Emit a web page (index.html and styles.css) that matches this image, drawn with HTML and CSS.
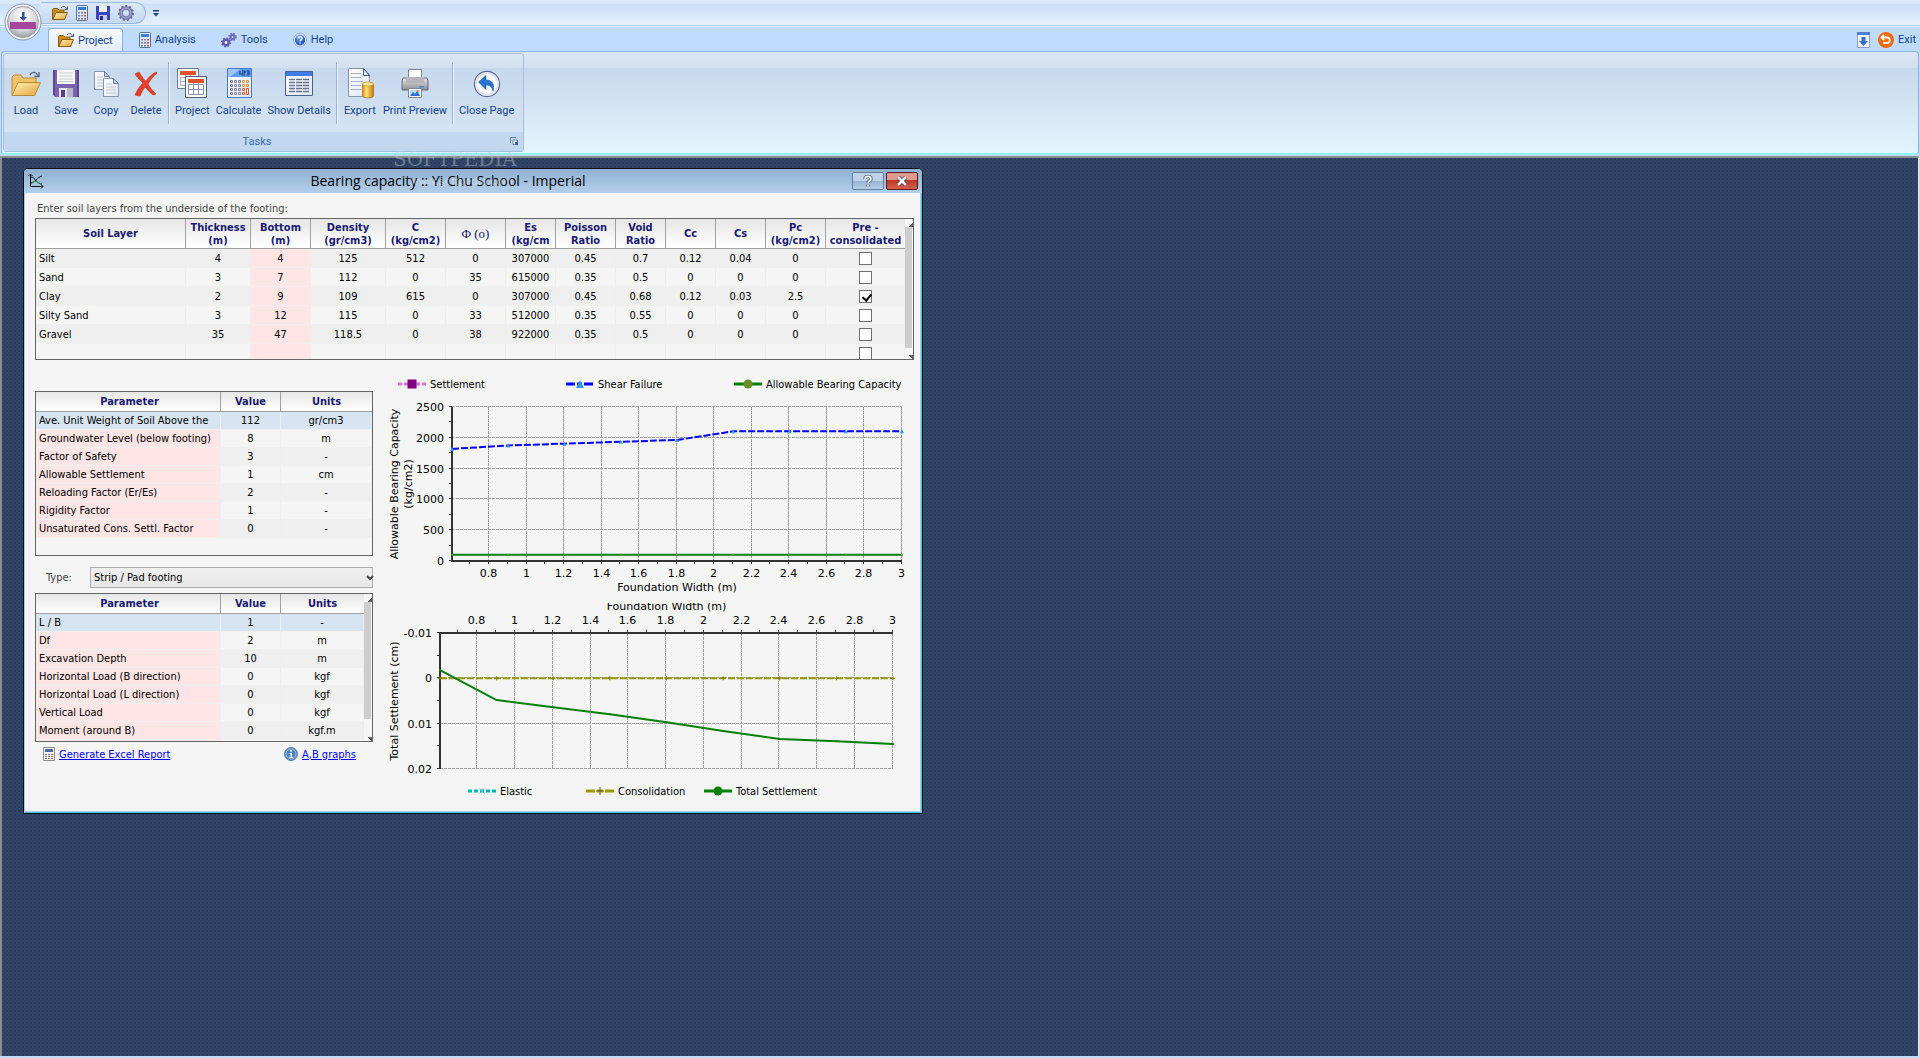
FILE: index.html
```html
<!DOCTYPE html>
<html lang="en">
<head>
  <meta charset="UTF-8" />
  <meta name="viewport" content="width=device-width, initial-scale=1" />
  <title>Bearing capacity</title>
  <link rel="stylesheet" href="styles.css">
</head>
<body>
  <svg class="sprite" aria-hidden="true">
    <defs>
      <linearGradient id="gold" x1="0" y1="0" x2="1" y2="1"><stop offset="0" stop-color="#fff0b8"/><stop offset="1" stop-color="#e5a53a"/></linearGradient>
      <linearGradient id="paper" x1="0" y1="0" x2="1" y2="1"><stop offset="0" stop-color="#fff"/><stop offset="1" stop-color="#dfe6f3"/></linearGradient>
      <linearGradient id="drum" x1="0" y1="0" x2="1" y2="0"><stop offset="0" stop-color="#d98a12"/><stop offset=".35" stop-color="#ffe27a"/><stop offset="1" stop-color="#c47a08"/></linearGradient>
      <linearGradient id="steel" x1="0" y1="0" x2="0" y2="1"><stop offset="0" stop-color="#e8e8e8"/><stop offset="1" stop-color="#8c8c92"/></linearGradient>
      <radialGradient id="orb" cx=".5" cy=".3" r=".8"><stop offset="0" stop-color="#fff"/><stop offset=".6" stop-color="#d0d2d6"/><stop offset="1" stop-color="#84888f"/></radialGradient>
      <radialGradient id="ball" cx=".4" cy=".3" r=".7"><stop offset="0" stop-color="#6fa4ff"/><stop offset="1" stop-color="#1748b8"/></radialGradient>

      <symbol id="i-open" viewBox="0 0 16 16">
        <path d="M.5 14.5V4.5l1-1h4l1.500 1.500h5v3" fill="#c98f24" stroke="#8a5a10"/>
        <path d="M.7 14.500 4 7.500h11.500l-3 7z" fill="url(#gold)" stroke="#8a5a10"/>
        <path d="M9 3c2-2.500 4.500-1.500 5.500 1M15.500 1.500v3h-3" fill="none" stroke="#4a5568"/>
      </symbol>
      <symbol id="i-calc" viewBox="0 0 12 16">
        <rect x=".5" y=".5" width="11" height="15" rx="1" fill="#dfe9f8" stroke="#58709c"/>
        <path d="M2 2h8v3H2z" fill="#3b7ee0"/>
        <path d="M2 7h2v1.500H2zM5 7h2v1.500H5zM2 10h2v1.500H2zM5 10h2v1.500H5zM2 13h2v1.500H2zM5 13h2v1.500H5z" fill="#6d83a8"/>
        <path d="M8 7h2v1.500H8zM8 10h2v1.500H8zM8 13h2v1.500H8z" fill="#d8442e"/>
      </symbol>
      <symbol id="i-disk" viewBox="0 0 14 14">
        <path d="M0 0h14v14H1.500L0 12.500z" fill="#3b46b8"/>
        <path d="M3 0h8v6H3z" fill="#f2f4ff"/><path d="M3 9h8v5H3z" fill="#c5cbe6"/><path d="M4 10h3v4H4z" fill="#262e80"/>
      </symbol>
      <symbol id="i-gear" viewBox="0 0 16 16">
        <circle cx="8" cy="8" r="5" fill="none" stroke="#8084b4" stroke-width="4"/>
        <circle cx="8" cy="8" r="7" fill="none" stroke="#666a9c" stroke-width="2" stroke-dasharray="2 2"/>
        <circle cx="8" cy="8" r="5" fill="none" stroke="#a9abc9" stroke-width="1"/>
      </symbol>
      <symbol id="i-gears" viewBox="0 0 16 16">
        <circle cx="5" cy="10.500" r="2.700" fill="#f0f3ff" stroke="#5f5bb0" stroke-width="2.500"/>
        <circle cx="5" cy="10.500" r="4.200" fill="none" stroke="#5f5bb0" stroke-width="1.600" stroke-dasharray="1.600 1.700"/>
        <circle cx="11.500" cy="5" r="2" fill="#f0f3ff" stroke="#6f6bbb" stroke-width="2.300"/>
        <circle cx="11.500" cy="5" r="3.500" fill="none" stroke="#6f6bbb" stroke-width="1.500" stroke-dasharray="1.400 1.400"/>
      </symbol>
      <symbol id="i-help" viewBox="0 0 14 14">
        <circle cx="7" cy="7" r="6.500" fill="#fff" stroke="#8aa4d8"/><circle cx="7" cy="7" r="5.200" fill="url(#ball)"/>
        <path d="M5 5.600c0-2.600 4-2.400 4-.2 0 1.400-1.900 1.500-1.900 2.800M7.100 9.600v1.200" fill="none" stroke="#fff" stroke-width="1.400"/>
      </symbol>

      <symbol id="b-load" viewBox="0 0 32 32">
        <path d="M2 27V9l2-2h7l2 3h13v5" fill="#f3c268" stroke="#b98a3c"/>
        <path d="M2 27.500 8 14.500h22.500l-6 13z" fill="url(#gold)" stroke="#b98a3c"/>
        <path d="M20 7c2-4 6-3 8 .5M29 4v4.500h-4.500" fill="none" stroke="#5a6678" stroke-width="1.300"/>
      </symbol>
      <symbol id="b-save" viewBox="0 0 32 32">
        <path d="M3 2h26v27H5l-2-2z" fill="#7a62b0"/><path d="M3 2h2v25H3zM27 2h2v27h-2z" fill="#5d478f"/>
        <path d="M7 2h18v14H7z" fill="#f8f8f8"/><path d="M9 5h14M9 8h14M9 11h14M9 13.500h14" stroke="#c9cbd2"/>
        <path d="M9 20h14v9H9z" fill="#e3e4ea"/><path d="M11 22h4v7h-4z" fill="#55447f"/><path d="M17 20h6v9h-6z" fill="#b7b7c8"/>
      </symbol>
      <symbol id="b-copy" viewBox="0 0 32 32">
        <path d="M4.500 3.500h10l5 5v13h-15z" fill="url(#paper)" stroke="#8795ad"/><path d="M14.500 3.500v5h5z" fill="#c5d0e2" stroke="#6c7f9e"/>
        <path d="M7 9h6M7 12h9M7 15h9M7 18h9" stroke="#c1c8d6"/>
        <path d="M13.500 10.500h10l5 5v13h-15z" fill="url(#paper)" stroke="#8795ad"/><path d="M23.500 10.500v5h5z" fill="#c5d0e2" stroke="#6c7f9e"/>
        <path d="M16 16h6M16 19h10M16 22h10M16 25h10" stroke="#c1c8d6"/>
      </symbol>
      <symbol id="b-delete" viewBox="0 0 32 32">
        <path d="M5 6l4-2c3 5 6 9 7 9 3-4 6-7 10-9l1 1c-4 4-7 7-9 11 2 4 5 7 8 10l-3 1c-4-3-6-6-8-8-2 3-4 6-5 9l-5-1c2-5 5-9 8-12-3-3-6-6-8-9z" fill="#e2402a" stroke="#c22c16" stroke-width=".6"/>
      </symbol>
      <symbol id="b-project" viewBox="0 0 32 32">
        <path d="M1.500.5h21v20h-21z" fill="#fff" stroke="#6c7b96"/><path d="M4 3h16v4H4z" fill="#d9532c"/><path d="M4.500 9.500h15v8h-15zM4.500 13.500h15M9.500 7v11M14.500 7v11" fill="none" stroke="#a3adc0"/>
        <path d="M9.500 8.500h21v21h-21z" fill="#fff" stroke="#4f5f7e"/><path d="M12 11h16v4H12z" fill="#d9532c"/><path d="M12.500 16.500h15v10h-15zM12.500 21.500h15M17.500 15v11M22.500 15v11" fill="none" stroke="#8792aa"/>
      </symbol>
      <symbol id="b-calculate" viewBox="0 0 32 32">
        <path d="M4.500.5h24v29h-24z" fill="url(#paper)" stroke="#4a7ac4"/><path d="M5 1h23v8H5z" fill="#5c9df0"/><path d="M5 1h12L7 9H5z" fill="#9dc6fa"/>
        <path d="M17 3v4M19 3h3v2h-3v2h3M23.500 3h2.500v4h-2.500M24 5h2" fill="none" stroke="#1c3a70"/>
        <path d="M7.500 12.500h2v2h-2zM11.500 12.500h2v2h-2zM15.500 12.500h2v2h-2zM7.500 16.500h2v2h-2zM11.500 16.500h2v2h-2zM15.500 16.500h2v2h-2zM7.500 20.500h2v2h-2zM11.500 20.500h2v2h-2zM15.500 20.500h2v2h-2zM7.500 24.500h2v2h-2zM11.500 24.500h2v2h-2zM15.500 24.500h2v2h-2z" fill="#fff" stroke="#74829c"/>
        <path d="M19.500 12.500h2v2h-2zM23.500 12.500h2v2h-2zM19.500 16.500h2v2h-2zM23.500 16.500h2v2h-2z" fill="#fff" stroke="#e2903a"/><path d="M19.500 20.500h2v2h-2zM19.500 24.500h2v2h-2zM23.500 20.500h2v6h-2z" fill="#fff" stroke="#d5552c"/>
      </symbol>
      <symbol id="b-details" viewBox="0 0 32 32">
        <path d="M2.500 3.500h27v24h-27z" fill="url(#paper)" stroke="#4a5f8c"/><path d="M3 4h26v4H3z" fill="#3f7ce6"/>
        <path d="M6 11.500h6M13 11.500h6M20 11.500h6M6 14.500h6M13 14.500h6M20 14.500h6M6 17.500h6M13 17.500h6M20 17.500h6M6 20.500h6M13 20.500h6M20 20.500h6M6 23.500h6M13 23.500h6M20 23.500h6" stroke="#6a7690" stroke-width="1.300"/>
      </symbol>
      <symbol id="b-export" viewBox="0 0 32 32">
        <path d="M4.500.5h15l6 6v22h-21z" fill="url(#paper)" stroke="#8795ad"/><path d="M19.500.5v7h6z" fill="#dfe8f4" stroke="#445a80"/>
        <path d="M7 5.500h10M7 9.500h10M7 13.500h12M7 17.500h10M7 21.500h10" stroke="#a9b2c8"/>
        <path d="M18.500 16v12c0 2.500 11 2.500 11 0V16z" fill="url(#drum)" stroke="#a86c10" stroke-width=".7"/><ellipse cx="24" cy="16" rx="5.500" ry="2" fill="#ffe796" stroke="#c48a1c" stroke-width=".7"/>
      </symbol>
      <symbol id="b-print" viewBox="0 0 32 32">
        <path d="M9.500 1.500h13v9h-13z" fill="#fff" stroke="#7d8799"/>
        <path d="M4 10h24l1 3v9H3v-9z" fill="url(#steel)" stroke="#666b76"/><path d="M7 9h18v6H7z" fill="#b4b6bb"/><path d="M20 18h5v1.500h-5z" fill="#3d8bf2"/>
        <path d="M9.500 20.500h13v9h-13z" fill="#fff" stroke="#7d8799"/><path d="M11 22h10v6H11z" fill="#b7dcff"/><path d="M11 28l3-4 2 2 2-3 3 5z" fill="#2d6fd0"/><circle cx="18.500" cy="23.200" r="1" fill="#e8642c"/>
      </symbol>
      <symbol id="b-close" viewBox="0 0 32 32">
        <circle cx="16" cy="16" r="12.500" fill="#fff" stroke="#56678c" stroke-width="1.300"/><circle cx="16" cy="16" r="11" fill="none" stroke="#dce3ee" stroke-width="2"/>
        <path d="M7.500 14 15 7.500V12c6 0 9 4 7 11-1-4-3-6-7-6v4.500z" fill="#2576d2" stroke="#1a539e" stroke-width=".6"/>
      </symbol>
    </defs>
  </svg>

  <header class="app-header">
    <button class="orb" aria-label="Application menu">
      <svg viewBox="0 0 38 38">
        <circle cx="19" cy="19" r="18" fill="#f4f6f9" stroke="#8492a8"/>
        <circle cx="19" cy="19" r="15.500" fill="url(#orb)" stroke="#9aa0aa"/>
        <path d="M6 19h26v7H6z" fill="#a5459c"/>
        <path d="M18 9h2.500v5H23l-3.700 4-3.800-4H18z" fill="#34558c"/>
      </svg>
    </button>
    <div class="quick-row">
      <div class="quick-bar">
        <button aria-label="Open"><svg width="16" height="16"><use href="#i-open"/></svg></button>
        <button aria-label="Calculate"><svg width="12" height="16"><use href="#i-calc"/></svg></button>
        <button aria-label="Save"><svg width="14" height="14"><use href="#i-disk"/></svg></button>
        <button aria-label="Settings"><svg width="16" height="16"><use href="#i-gear"/></svg></button>
      </div>
      <button class="quick-more" aria-label="Customize"><svg width="6" height="7" viewBox="0 0 6 7"><path d="M0 0h6v1.500H0zM0 3h6L3 6.500z" fill="#1f4080"/></svg></button>
    </div>
    <nav class="tabs">
      <a class="tab active" href="#"><svg width="16" height="16"><use href="#i-open"/></svg>Project</a>
      <a class="tab" href="#"><svg width="12" height="16"><use href="#i-calc"/></svg>Analysis</a>
      <a class="tab" href="#"><svg width="16" height="16"><use href="#i-gears"/></svg>Tools</a>
      <a class="tab" href="#"><svg width="14" height="14"><use href="#i-help"/></svg>Help</a>
      <span class="spacer"></span>
      <button class="corner" aria-label="Minimize ribbon"><svg width="13" height="16" viewBox="0 0 13 16"><path d="M.5.500h12v15H.500z" fill="#eef3fc" stroke="#8aa0c8"/><path d="M0 0h13v3H0z" fill="#4d7fd8"/><path d="M4.500 5h4v4H11l-4.500 5L2 9h2.500z" fill="#3d6cc8"/></svg></button>
      <button class="corner"><svg width="16" height="16" viewBox="0 0 16 16"><circle cx="8" cy="8" r="8" fill="#f4690c"/><path d="M3.500 5.500h5.500a2.500 2.500 0 0 1 0 5.500H5M6 3 3.500 5.500 6 8" fill="none" stroke="#fff" stroke-width="1.800"/></svg>Exit</button>
    </nav>
    <section class="ribbon">
      <div class="group">
        <div class="tools">
          <button class="tool"><svg><use href="#b-load"/></svg>Load</button>
          <button class="tool"><svg><use href="#b-save"/></svg>Save</button>
          <button class="tool"><svg><use href="#b-copy"/></svg>Copy</button>
          <button class="tool"><svg><use href="#b-delete"/></svg>Delete</button>
          <span class="sep"></span>
          <button class="tool"><svg><use href="#b-project"/></svg>Project</button>
          <button class="tool"><svg><use href="#b-calculate"/></svg>Calculate</button>
          <button class="tool"><svg><use href="#b-details"/></svg>Show Details</button>
          <span class="sep"></span>
          <button class="tool"><svg><use href="#b-export"/></svg>Export</button>
          <button class="tool"><svg><use href="#b-print"/></svg>Print Preview</button>
          <span class="sep"></span>
          <button class="tool"><svg><use href="#b-close"/></svg>Close Page</button>
        </div>
        <div class="caption">
          <span>Tasks</span>
          <button aria-label="Tasks options"><svg width="8" height="8" viewBox="0 0 8 8"><path d="M.5 6V.500H6" fill="none" stroke="#5d82b4"/><path d="M3 3h4.500v4.500H3z" fill="#fff" stroke="#5d82b4"/><path d="M5 5h3v3H5z" fill="#3c6298"/></svg></button>
        </div>
      </div>
    </section>
  </header>

  <main class="workspace">
    <span class="watermark">SOFTPEDIA</span>
    <section class="window">
      <div class="titlebar">
        <svg class="app-icon" width="16" height="16" viewBox="0 0 16 16"><path d="M2.500 1v12.500H15M.5 3l2-2 2 2M13 11.500l2 2-2 2M3 4c4 0 6 7 11 7M3 10c4 0 6-6 11-7" fill="none" stroke="#111"/><path d="M3 10.500c3-3 6-3 10 1" fill="none" stroke="#2d9a3a"/></svg>
        <h1>Bearing capacity :: Yi Chu School - Imperial</h1>
        <span class="watermark-url">www.softpedia.com</span>
        <button class="win-btn" aria-label="Help"><svg width="10" height="12" viewBox="0 0 10 12"><path d="M2 4c0-3.500 6-3.500 6 0 0 2-3 2-3 4M5 9.500v2" fill="none" stroke="#4a5a70" stroke-width="3.400"/><path d="M2 4c0-3.500 6-3.500 6 0 0 2-3 2-3 4M5 9.500v2" fill="none" stroke="#fff" stroke-width="1.600"/></svg></button>
        <button class="win-btn close" aria-label="Close"><svg width="12" height="10" viewBox="0 0 12 10"><path d="M2 1l8 8M10 1L2 9" stroke="#5a3a40" stroke-width="4.200"/><path d="M2 1l8 8M10 1L2 9" stroke="#fff" stroke-width="2.500"/></svg></button>
      </div>

      <div class="content">
        <p class="hint">Enter soil layers from the underside of the footing:</p>
        <div class="grid-box soil">
          <table>
            <colgroup><col class="w150"><col class="w65"><col class="w60"><col class="w75"><col class="w60"><col class="w60"><col class="w50"><col class="w60"><col class="w50"><col class="w50"><col class="w50"><col class="w60"><col></colgroup>
            <thead>
              <tr><th>Soil Layer</th><th>Thickness<br>(m)</th><th>Bottom<br>(m)</th><th>Density<br>(gr/cm3)</th><th>C<br>(kg/cm2)</th><th class="phi">Φ (o)</th><th>Es<br>(kg/cm</th><th>Poisson<br>Ratio</th><th>Void<br>Ratio</th><th>Cc</th><th>Cs</th><th>Pc<br>(kg/cm2)</th><th>Pre -<br>consolidated</th></tr>
            </thead>
            <tbody>
              <tr><td>Silt</td><td>4</td><td>4</td><td>125</td><td>512</td><td>0</td><td>307000</td><td>0.45</td><td>0.7</td><td>0.12</td><td>0.04</td><td>0</td><td><input type="checkbox" aria-label="Silt pre-consolidated"></td></tr>
              <tr><td>Sand</td><td>3</td><td>7</td><td>112</td><td>0</td><td>35</td><td>615000</td><td>0.35</td><td>0.5</td><td>0</td><td>0</td><td>0</td><td><input type="checkbox" aria-label="Sand pre-consolidated"></td></tr>
              <tr><td>Clay</td><td>2</td><td>9</td><td>109</td><td>615</td><td>0</td><td>307000</td><td>0.45</td><td>0.68</td><td>0.12</td><td>0.03</td><td>2.5</td><td><input type="checkbox" aria-label="Clay pre-consolidated" checked></td></tr>
              <tr><td>Silty Sand</td><td>3</td><td>12</td><td>115</td><td>0</td><td>33</td><td>512000</td><td>0.35</td><td>0.55</td><td>0</td><td>0</td><td>0</td><td><input type="checkbox" aria-label="Silty Sand pre-consolidated"></td></tr>
              <tr><td>Gravel</td><td>35</td><td>47</td><td>118.5</td><td>0</td><td>38</td><td>922000</td><td>0.35</td><td>0.5</td><td>0</td><td>0</td><td>0</td><td><input type="checkbox" aria-label="Gravel pre-consolidated"></td></tr>
              <tr><td></td><td></td><td></td><td></td><td></td><td></td><td></td><td></td><td></td><td></td><td></td><td></td><td><input type="checkbox" aria-label="New layer pre-consolidated"></td></tr>
            </tbody>
          </table>
          <div class="scroll"><i class="up"></i><i class="thumb"></i><i class="down"></i></div>
        </div>

        <div class="columns">
          <div class="left">
            <div class="grid-box params">
              <table>
                <colgroup><col class="w185"><col class="w60"><col></colgroup>
                <thead><tr><th>Parameter</th><th>Value</th><th>Units</th></tr></thead>
                <tbody>
                  <tr class="selected"><td>Ave. Unit Weight of Soil Above the</td><td>112</td><td>gr/cm3</td></tr>
                  <tr><td>Groundwater Level (below footing)</td><td>8</td><td>m</td></tr>
                  <tr><td>Factor of Safety</td><td>3</td><td>-</td></tr>
                  <tr><td>Allowable Settlement</td><td>1</td><td>cm</td></tr>
                  <tr><td>Reloading Factor (Er/Es)</td><td>2</td><td>-</td></tr>
                  <tr><td>Rigidity Factor</td><td>1</td><td>-</td></tr>
                  <tr><td>Unsaturated Cons. Settl. Factor</td><td>0</td><td>-</td></tr>
                </tbody>
              </table>
            </div>
            <div class="type-row">
              <label for="type">Type:</label>
              <div class="select">
                <select id="type"><option>Strip / Pad footing</option></select>
                <svg width="8" height="6" viewBox="0 0 8 6"><path d="M1 1l3 3 3-3" fill="none" stroke="#444" stroke-width="2"/></svg>
              </div>
            </div>
            <div class="grid-box footing">
              <table>
                <colgroup><col class="w185"><col class="w60"><col></colgroup>
                <thead><tr><th>Parameter</th><th>Value</th><th>Units</th></tr></thead>
                <tbody>
                  <tr class="selected"><td>L / B</td><td>1</td><td>-</td></tr>
                  <tr><td>Df</td><td>2</td><td>m</td></tr>
                  <tr><td>Excavation Depth</td><td>10</td><td>m</td></tr>
                  <tr><td>Horizontal Load (B direction)</td><td>0</td><td>kgf</td></tr>
                  <tr><td>Horizontal Load (L direction)</td><td>0</td><td>kgf</td></tr>
                  <tr><td>Vertical Load</td><td>0</td><td>kgf</td></tr>
                  <tr><td>Moment (around B)</td><td>0</td><td>kgf.m</td></tr>
                  <tr><td></td><td></td><td></td></tr>
                </tbody>
              </table>
              <div class="scroll"><i class="up"></i><i class="thumb"></i><i class="down"></i></div>
            </div>
            <div class="links">
              <svg width="12" height="14" viewBox="0 0 12 14"><path d="M.5.500h11v13H.500z" fill="#f2f2f2" stroke="#8d8d8d"/><path d="M2 2h8v3H2z" fill="#4a6a9c"/><path d="M2 7h2v1H2zM5 7h2v1H5zM2 9h2v1H2zM5 9h2v1H5zM2 11h2v1H2zM5 11h2v1H5z" fill="#777"/><path d="M8 7h2v1H8zM8 9h2v1H8zM8 11h2v1H8z" fill="#d05040"/></svg>
              <a href="#">Generate Excel Report</a>
              <span class="spacer"></span>
              <svg width="14" height="14" viewBox="0 0 14 14"><circle cx="7" cy="7" r="6.500" fill="#4f86c0" stroke="#5a7ca4"/><circle cx="7" cy="7" r="5" fill="none" stroke="#9cc0e4"/><path d="M6 3h2v1.500H6zM5.500 6H8v4h1v1H5.500v-1h1V7h-1z" fill="#fff"/></svg>
              <a href="#">A,B graphs</a>
            </div>
          </div>
          <div class="charts">
            <svg id="capacity" class="chart" width="530" height="231" role="img" aria-label="Allowable bearing capacity by foundation width"></svg>
            <svg id="settlement" class="chart" width="530" height="204" role="img" aria-label="Total settlement by foundation width"></svg>
          </div>
        </div>
      </div>
    </section>
  </main>

  <script src="charts.js"></script>
</body>
</html>
```
FILE: styles.css
```css
* {
  box-sizing: border-box;
}

body {
  margin: 0;
  min-height: 100vh;
  display: flex;
  flex-direction: column;
  background: #bfdbff;
  font-family: "DejaVu Sans Condensed", "DejaVu Sans", sans-serif;
  font-size: 11px;
  color: #000;
}

button {
  border: none;
  background: none;
  padding: 0;
  font: inherit;
  color: inherit;
  cursor: pointer;
}

.sprite {
  position: absolute;
  width: 0;
  height: 0;
}

.spacer {
  flex: 1;
}

/* header */
.app-header {
  position: relative;
  font-family: Roboto, "Liberation Sans", sans-serif;
  color: #15428b;
  background: #bfdbff;
}

.orb {
  position: absolute;
  left: 4px;
  top: 3px;
  width: 38px;
  height: 38px;
}

.quick-row {
  display: flex;
  align-items: center;
  height: 27px;
  padding: 0 0 1px 41px;
  background: linear-gradient(#d9e8fb 0 4px, #c9def8 4px, #e6f1fd 25px, #b3d0f5 25px 26px, #e4f0ff 26px);
}

.quick-bar {
  display: flex;
  align-items: center;
  gap: 8px;
  height: 22px;
  padding: 0 11px;
  border: 1px solid #9cb9e0;
  border-left: none;
  border-radius: 0 12px 12px 0;
  background: linear-gradient(#dce9fa, #c3d8f2);
}

.quick-bar button {
  display: flex;
}

.quick-more {
  margin-left: 7px;
}

.tabs {
  display: flex;
  align-items: center;
  height: 24px;
  padding: 1px 4px 0 48px;
}

.tab {
  display: flex;
  align-items: center;
  gap: 4px;
  height: 23px;
  margin-right: 7px;
  padding: 0 9px;
  color: inherit;
  text-decoration: none;
}

.tab.active {
  border: 1px solid #8fb2e2;
  border-bottom: none;
  border-radius: 4px 4px 0 0;
  background: linear-gradient(#f6faff, #e2ecf9);
}

.corner {
  display: flex;
  align-items: center;
  gap: 4px;
  margin-left: 8px;
}

.ribbon {
  margin: 0 1px 1px;
  padding: 1px;
  border: 1px solid #8db2e3;
  border-bottom: 2px solid #8ff0f8;
  border-radius: 4px;
  background: linear-gradient(#dbe6f3, #d2e0f0 16px, #c7d8ed 16px, #e2f5fd);
}

.group {
  width: 521px;
  border: 1px solid #a3c0de;
  border-radius: 3px;
  background: linear-gradient(#dbe6f3, #d2e0f0 14px, #c7d8ed 14px, #d7e7f5);
}

.tools {
  display: flex;
  height: 78px;
  padding: 8px 0 8px 2px;
}

.tool {
  display: flex;
  flex-direction: column;
  align-items: center;
  gap: 3px;
  min-width: 40px;
  padding: 6px 3px 0;
  line-height: 16px;
  white-space: nowrap;
}

.tool svg {
  width: 32px;
  height: 32px;
}

.sep {
  width: 2px;
  margin: 0 2px;
  border-left: 1px solid #96b1d2;
  border-right: 1px solid #f2f8ff;
}

.caption {
  display: flex;
  align-items: center;
  height: 19px;
  padding: 0 5px 0 0;
  background: #c1d8f0;
  color: #3e6aaa;
}

.caption span {
  flex: 1;
  text-align: center;
}

/* desktop area */
.workspace {
  flex: 1;
  position: relative;
  min-height: 660px;
  margin: 0 1px 2px 0;
  border-top: 2px solid #8d8d8d;
  border-left: 2px solid #8d8d8d;
  border-right: 1px solid #e8e8e8;
  background: radial-gradient(circle at 1px 1px, #2a3d60 0 1px, transparent 1px) 0 0 / 4px 4px, radial-gradient(circle at 3px 3px, #2d4165 0 1px, transparent 1px) 0 0 / 4px 4px, #324668;
}

.watermark {
  position: absolute;
  left: 391px;
  top: -8px;
  font: 20px/18px "DejaVu Serif", serif;
  color: rgba(190, 200, 215, 0.45);
}

.window {
  position: absolute;
  left: 21px;
  top: 10px;
  width: 900px;
  border: 1px solid #111;
  border-radius: 5px 5px 0 0;
  background: #f5f5f5;
  box-shadow: inset 1px 0 #a9cbe8, inset -1px -1px #3fc6e4, inset -2px -2px #a9cbe8;
}

.titlebar {
  position: relative;
  display: flex;
  align-items: center;
  gap: 2px;
  height: 24px;
  padding: 0 4px;
  border-radius: 4px 4px 0 0;
  background: linear-gradient(#8fb0d2, #b4cfea);
}

.titlebar h1 {
  flex: 1;
  margin: 0;
  font: 14px/24px "Open Sans", "Noto Sans", sans-serif;
  text-align: center;
}

.watermark-url {
  position: absolute;
  left: 386px;
  top: 4px;
  font: bold 11px/16px "Liberation Sans", sans-serif;
  color: rgba(255, 255, 255, 0.3);
}

.win-btn {
  display: flex;
  align-items: center;
  justify-content: center;
  width: 32px;
  height: 18px;
  border: 1px solid #667f9c;
  border-radius: 2px;
  background: linear-gradient(#bdd2e8 50%, #98b4d2 50%, #b4cee8);
}

.win-btn.close {
  border-color: #5c1820;
  background: linear-gradient(#e09a8c 45%, #b93a26 45%, #d4604c);
}

.content {
  padding: 7px 8px 6px 11px;
}

.hint {
  margin: 0;
  padding-left: 2px;
  line-height: 18px;
  color: #444;
}

.grid-box {
  display: flex;
  border: 1px solid #646464;
  overflow: hidden;
}

table {
  flex: 1;
  table-layout: fixed;
  width: 0;
  border-collapse: separate;
  border-spacing: 0;
  align-self: flex-start;
}

th {
  padding: 0;
  border-right: 1px solid #a0a0a0;
  border-bottom: 1px solid #a0a0a0;
  background: linear-gradient(#e6e6e6, #fff);
  color: #191970;
  line-height: 13px;
  white-space: nowrap;
}

th:last-child {
  border-right: none;
}

th.phi {
  font: 13px "Liberation Serif", serif;
}

td {
  height: 18px;
  padding: 0;
  border-right: 1px solid #eee;
  border-bottom: 1px solid #f0f0f0;
  line-height: 17px;
  text-align: center;
  white-space: nowrap;
}

td:first-child {
  padding-left: 3px;
  text-align: left;
}

tr:nth-child(odd) td {
  background: #efefef;
}

.soil {
  height: 142px;
}

.soil th {
  height: 30px;
}

.soil td {
  height: 19px;
}

.soil td:nth-child(3),
.params td:first-child,
.footing td:first-child {
  background: #ffe5e5;
}

.params th,
.footing th {
  height: 20px;
}

.params th:first-child,
.footing th:first-child {
  padding-left: 3px;
}

.params tr.selected td,
.footing tr.selected td {
  background: #d7e5f3;
}

.w50 { width: 50px; }
.w60 { width: 60px; }
.w65 { width: 65px; }
.w75 { width: 75px; }
.w150 { width: 150px; }
.w185 { width: 185px; }

input[type="checkbox"] {
  appearance: none;
  display: block;
  width: 13px;
  height: 13px;
  margin: 0 auto;
  border: 1px solid #707070;
  background: #fff;
}

input[type="checkbox"]:checked::after {
  content: "";
  display: block;
  width: 4px;
  height: 7px;
  margin: 1px 0 0 4px;
  border: solid #000;
  border-width: 0 2px 2px 0;
  transform: rotate(40deg);
}

.scroll {
  display: flex;
  flex-direction: column;
  width: 8px;
}

.scroll .up,
.scroll .down {
  height: 8px;
  background: linear-gradient(135deg, transparent 50%, #606060 50%) 3px 4px / 5px 4px no-repeat;
}

.scroll .down {
  height: 4px;
  background: linear-gradient(45deg, transparent 50%, #606060 50%) 3px 0 / 5px 4px no-repeat;
}

.scroll .thumb {
  flex: 1;
  width: 7px;
  margin-bottom: 7px;
  background: #cdcdcd;
}

.footing .thumb {
  margin-bottom: 18px;
}

.columns {
  display: grid;
  grid-template-columns: 338px 1fr;
  gap: 11px;
}

.left {
  padding-top: 31px;
}

.params {
  height: 165px;
}

.type-row {
  display: flex;
  align-items: center;
  height: 37px;
  padding: 5px 0 0 11px;
  color: #444;
}

.type-row label {
  width: 44px;
}

.select {
  position: relative;
  flex: 1;
}

.select svg {
  position: absolute;
  right: -1px;
  top: 8px;
}

select {
  appearance: none;
  display: block;
  width: 100%;
  height: 21px;
  padding: 0 3px;
  border: 1px solid #acacac;
  border-radius: 0;
  background: linear-gradient(#f0f0f0, #e6e6e6);
  font: inherit;
  color: #000;
}

.footing {
  height: 149px;
}

.links {
  display: flex;
  align-items: center;
  gap: 4px;
  height: 24px;
  padding: 0 17px 0 8px;
}

.links a {
  color: #00f;
}

.charts {
  display: flex;
  flex-direction: column;
  padding-top: 12px;
}

.chart {
  display: block;
  max-width: 100%;
  font-family: "DejaVu Sans", sans-serif;
  font-size: 11px;
}

.chart .legend {
  font-family: "DejaVu Sans Condensed", "DejaVu Sans", sans-serif;
}

.gridline {
  stroke: #a0a0a0;
  stroke-dasharray: 3 1;
}

.axis {
  stroke: #333;
  stroke-width: 2;
}

.tick {
  stroke: #333;
}
```
FILE: charts.js
```js
const SVG_NS = 'http://www.w3.org/2000/svg';

function add(parent, name, attrs, text) {
  const el = document.createElementNS(SVG_NS, name);
  for (const key in attrs) el.setAttribute(key, attrs[key]);
  if (text !== undefined) el.textContent = text;
  parent.appendChild(el);
  return el;
}

function line(svg, x1, y1, x2, y2, cls) {
  add(svg, 'line', { x1, y1, x2, y2, class: cls });
}

function marker(svg, kind, x, y, r, color) {
  if (kind === 'square') add(svg, 'rect', { x: x - r, y: y - r, width: r * 2, height: r * 2, fill: color });
  if (kind === 'circle') add(svg, 'circle', { cx: x, cy: y, r, fill: color });
  if (kind === 'triangle') add(svg, 'path', { d: `M${x - r} ${y + r}L${x} ${y - r}L${x + r} ${y + r}z`, fill: color });
  if (kind === 'cross') add(svg, 'path', { d: `M${x - r} ${y - r}l${r * 2} ${r * 2}m0 ${-r * 2}l${-r * 2} ${r * 2}`, stroke: color });
  if (kind === 'plus') add(svg, 'path', { d: `M${x - r} ${y}h${r * 2}M${x} ${y - r}v${r * 2}`, stroke: color });
}

function drawChart(id, o) {
  const svg = document.getElementById(id);
  const px = v => o.left + (v - 0.6) / 2.4 * (o.right - o.left);
  const py = v => o.top + (v - o.yTop) / (o.yBottom - o.yTop) * (o.bottom - o.top);
  const xAxis = o.xOnTop ? o.top : o.bottom;
  const out = o.xOnTop ? -3 : 3;

  // x grid, ticks and labels
  for (let i = 7; i <= 30; i++) {
    const x = Math.floor(px(i / 10)) - 0.5;
    line(svg, x, xAxis, x, xAxis + out, 'tick');
    if (i % 2 === 0) {
      line(svg, x, o.top, x, o.bottom, 'gridline');
      add(svg, 'text', { x, y: o.xLabelY, 'text-anchor': 'middle' }, i / 10);
    }
  }

  // y grid, ticks and labels
  o.yLabels.forEach((v, i) => {
    const y = Math.round(py(v)) - 0.5;
    line(svg, o.left, y, o.right, y, 'gridline');
    line(svg, o.left - 3, y, o.left, y, 'tick');
    add(svg, 'text', { x: o.left - 8, y: y + 4, 'text-anchor': 'end' }, v);
    if (i > 0) {
      const mid = Math.round(py((v + o.yLabels[i - 1]) / 2)) - 0.5;
      line(svg, o.left - 3, mid, o.left, mid, 'tick');
    }
  });

  line(svg, o.left, o.top, o.left, o.bottom, 'axis');
  line(svg, o.left - 1, xAxis, o.right, xAxis, 'axis');

  o.series.forEach(s => {
    const points = s.values.map((v, i) => [px(0.6 + i * 0.3), py(v)]);
    add(svg, 'polyline', { points: points.join(' '), fill: 'none', stroke: s.color, 'stroke-width': 2, 'stroke-dasharray': s.dash || 'none' });
    points.forEach(p => marker(svg, s.marker, p[0], p[1], s.markerSize, s.markerColor));
  });

  o.legend.forEach(l => {
    const g = add(svg, 'g', { class: 'legend' });
    add(g, 'path', { d: `M${l.x} ${o.legendY}h28`, stroke: l.color, 'stroke-width': 3, 'stroke-dasharray': l.dash || 'none' });
    marker(g, l.marker, l.x + 14, o.legendY, l.r, l.markerColor);
    add(g, 'text', { x: l.x + 32, y: o.legendY + 4 }, l.name);
  });

  const center = (o.left + o.right) / 2;
  add(svg, 'text', { x: center, y: o.titleY, 'text-anchor': 'middle' }, 'Foundation Width (m)');
  o.yTitle.forEach((t, i) => {
    add(svg, 'text', { transform: `translate(${14 + i * 14} ${o.yTitleY}) rotate(-90)`, 'text-anchor': 'middle' }, t);
  });
}

drawChart('capacity', {
  left: 68, right: 518, top: 35, bottom: 189,
  yTop: 2500, yBottom: 0, yLabels: [2500, 2000, 1500, 1000, 500, 0],
  xLabelY: 205, titleY: 219, legendY: 12,
  yTitle: ['Allowable Bearing Capacity', '(kg/cm2)'], yTitleY: 112,
  series: [
    { values: [1820, 1875, 1905, 1935, 1965, 2105, 2105, 2105, 2105], color: '#00f', dash: '7 2', marker: 'triangle', markerSize: 2, markerColor: '#3399ff' },
    { values: [100, 100, 100, 100, 100, 100, 100, 100, 100], color: '#008000', marker: 'circle', markerSize: 1, markerColor: '#6b8e23' }
  ],
  legend: [
    { x: 14, name: 'Settlement', color: '#da70d6', dash: '4 2', marker: 'square', r: 4.5, markerColor: '#800080' },
    { x: 182, name: 'Shear Failure', color: '#00f', dash: '9 2 5 2', marker: 'triangle', r: 4, markerColor: '#3399ff' },
    { x: 350, name: 'Allowable Bearing Capacity', color: '#008000', marker: 'circle', r: 4.5, markerColor: '#6b8e23' }
  ]
});

drawChart('settlement', {
  left: 56, right: 509, top: 30, bottom: 166, xOnTop: true,
  yTop: -0.01, yBottom: 0.02, yLabels: [-0.01, 0, 0.01, 0.02],
  xLabelY: 21, titleY: 7, legendY: 188,
  yTitle: ['Total Settlement (cm)'], yTitleY: 98,
  series: [
    { values: [0, 0, 0, 0, 0, 0, 0, 0, 0], color: '#999900', dash: '7 2', marker: 'plus', markerSize: 2, markerColor: '#808000' },
    { values: [-0.0018, 0.0048, 0.0064, 0.0079, 0.0097, 0.0116, 0.0134, 0.0139, 0.0145], color: '#008000', marker: 'circle', markerSize: 1, markerColor: '#008000' }
  ],
  legend: [
    { x: 84, name: 'Elastic', color: '#00b3b3', dash: '4 2', marker: 'cross', r: 2.5, markerColor: '#40c8d8' },
    { x: 202, name: 'Consolidation', color: '#999900', dash: '9 2 6 2', marker: 'plus', r: 4, markerColor: '#6b6b00' },
    { x: 320, name: 'Total Settlement', color: '#008000', marker: 'circle', r: 4.5, markerColor: '#008000' }
  ]
});
```
